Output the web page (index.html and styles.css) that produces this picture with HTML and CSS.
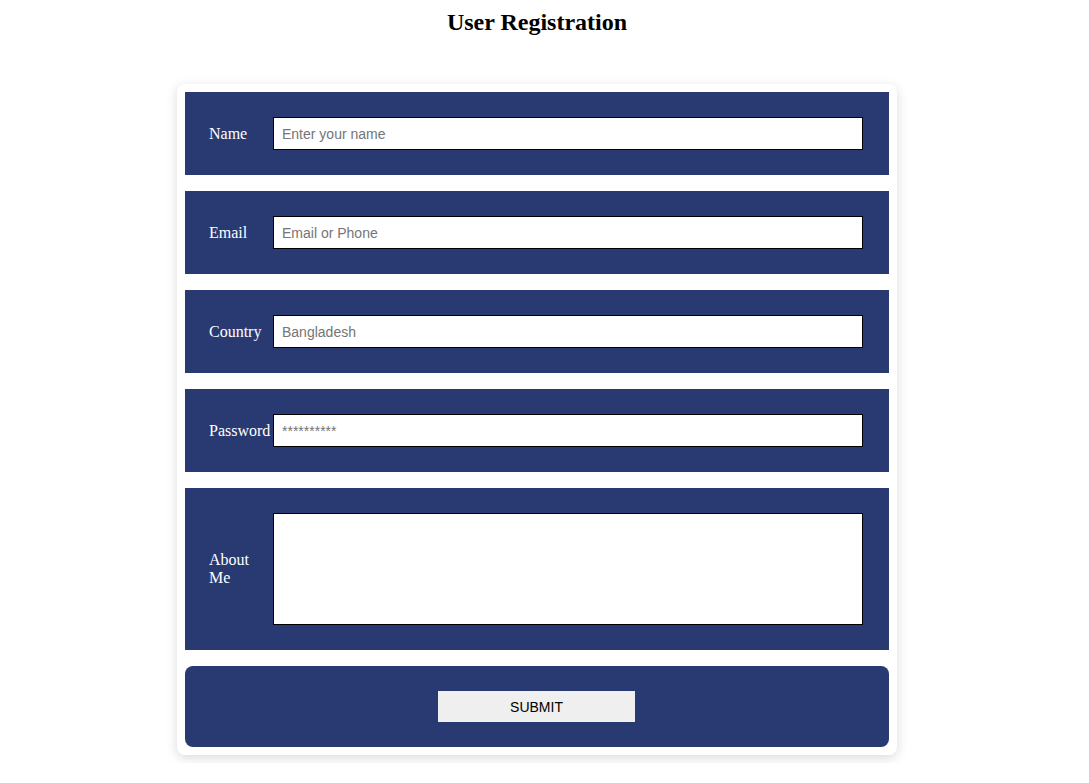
FILE: index.html
```html
<!DOCTYPE html>
<html>
<head>
<meta charset="utf-8">
<title>User Registration</title>
<link rel="stylesheet" href="styles.css">
</head>
<body>
<div class="page">
  <h2 class="title">User Registration</h2>
  <form class="card">
    <div class="row">
      <label class="label" for="name">Name</label>
      <input class="field" id="name" type="text" placeholder="Enter your name">
    </div>
    <div class="row">
      <label class="label" for="email">Email</label>
      <input class="field" id="email" type="text" placeholder="Email or Phone">
    </div>
    <div class="row">
      <label class="label" for="country">Country</label>
      <input class="field" id="country" type="text" placeholder="Bangladesh">
    </div>
    <div class="row">
      <label class="label" for="password">Password</label>
      <input class="field" id="password" type="password" placeholder="**********">
    </div>
    <div class="row">
      <label class="label" for="about">About Me</label>
      <textarea class="field area" id="about"></textarea>
    </div>
    <div class="row submit-row">
      <button class="submit" type="button">SUBMIT</button>
    </div>
  </form>
</div>
</body>
</html>
```

FILE: styles.css
```css
html, body {
  margin: 0;
  padding: 0;
  background: #ffffff;
}

body {
  font-family: "Liberation Serif", "Times New Roman", serif;
}

.page {
  padding: 8px 23px 8px 8px;
}

.title {
  margin: 0 0 48px;
  font-size: 24px;
  font-weight: bold;
  text-align: center;
  color: #000;
  line-height: 28px;
}

.card {
  width: 720px;
  box-sizing: border-box;
  margin: 0 auto;
  padding: 8px;
  background: #fff;
  border-radius: 8px;
  box-shadow: 0 3px 12px rgba(0, 0, 0, 0.15);
  display: flex;
  flex-direction: column;
  gap: 16px;
}

.row {
  background: #293a72;
  display: flex;
  align-items: center;
  padding: 25px 26px 25px 24px;
}

.label {
  width: 64px;
  flex: none;
  color: #fff;
  font-size: 16px;
  line-height: 18px;
}

.field {
  flex: 1;
  height: 33px;
  box-sizing: border-box;
  border: 1px solid #000;
  background: #fff;
  padding: 0 8px;
  font-family: "Liberation Sans", Arial, sans-serif;
  font-size: 14px;
  color: #000;
  margin: 0;
  outline: none;
}

.field::placeholder {
  color: #757575;
}

.area {
  height: 112px;
  resize: none;
  padding: 8px;
  display: block;
}

.submit-row {
  justify-content: center;
  border-radius: 8px;
  padding: 25px 25px 25px 24px;
}

.submit {
  width: 197px;
  height: 31px;
  border: none;
  background: #efefef;
  font-family: "Liberation Sans", Arial, sans-serif;
  font-size: 14px;
  color: #000;
  padding: 0;
}
```
